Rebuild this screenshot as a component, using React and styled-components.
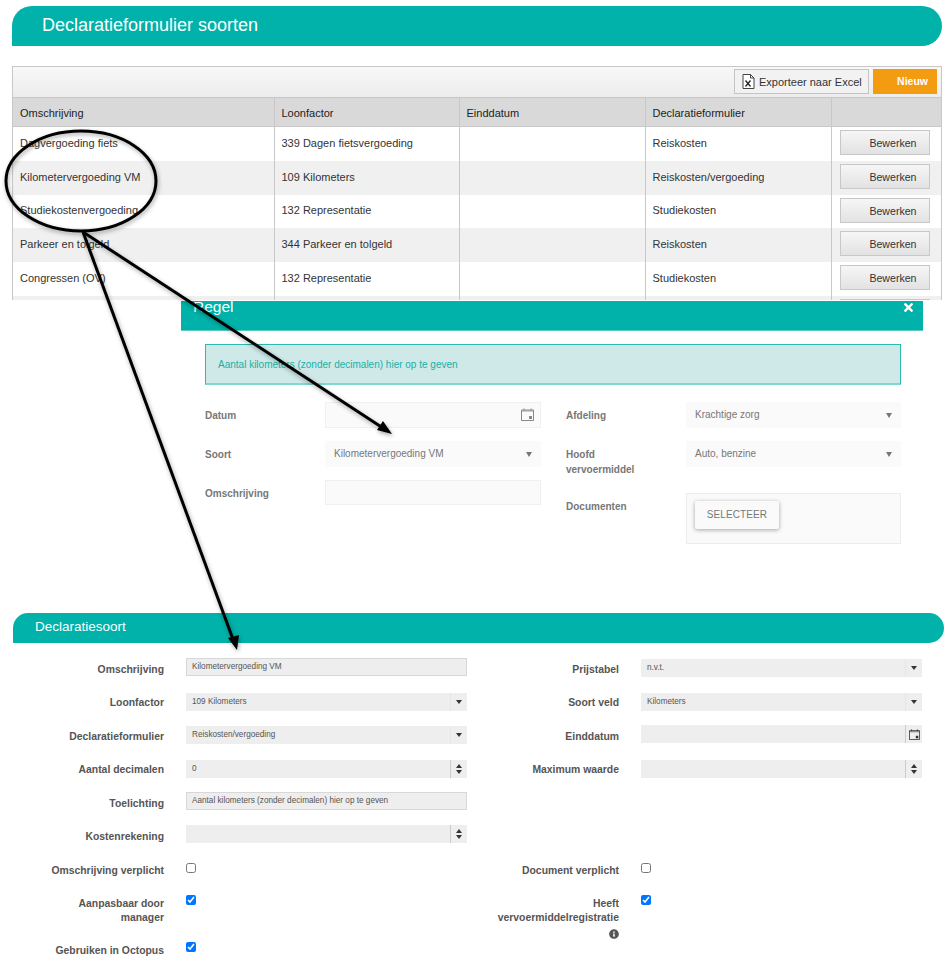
import React from 'react'
import styled, { createGlobalStyle } from 'styled-components'
import { FaTimes, FaInfoCircle } from 'react-icons/fa'

const GlobalStyle = createGlobalStyle`
  html, body {
    margin: 0;
    padding: 0;
    background: #fff;
    overflow: hidden;
  }
  body {
    font-family: "Liberation Sans", Arial, sans-serif;
  }
`

const teal = '#00b2a9'

const Page = styled.div`
  position: relative;
  width: 952px;
  height: 975px;
  overflow: hidden;
  padding-top: 6px;
  box-sizing: border-box;
`

const TitleBar = styled.div`
  box-sizing: border-box;
  margin-left: 12px;
  width: 930px;
  height: 40px;
  padding-left: 30px;
  background: ${teal};
  border-radius: 20px 20px 20px 0;
  color: #fff;
  font-size: 18px;
  line-height: 38px;
`

const GridBox = styled.div`
  box-sizing: border-box;
  margin: 20px 0 0 12px;
  width: 930px;
  height: 234px;
  overflow: hidden;
  border: 1px solid #c8c8c8;
  border-bottom: 0;
`

const Toolbar = styled.div`
  box-sizing: border-box;
  height: 31px;
  padding: 2px 4px 0 0;
  display: flex;
  justify-content: flex-end;
  gap: 4px;
  background: linear-gradient(#f8f8f8, #ececec);
  border-bottom: 1px solid #c8c8c8;
`

const ExportButton = styled.div`
  box-sizing: border-box;
  width: 135px;
  height: 25px;
  display: flex;
  align-items: center;
  gap: 4px;
  padding-left: 7px;
  background: #f2f2f2;
  border: 1px solid #c4c4c4;
  color: #333;
  font-size: 11px;
  white-space: nowrap;
`

const NewButton = styled.div`
  box-sizing: border-box;
  width: 64px;
  height: 25px;
  padding-right: 9px;
  background: #f39c12;
  color: #fff;
  font-size: 10.5px;
  font-weight: bold;
  line-height: 24px;
  text-align: right;
`

const Table = styled.table`
  width: 928px;
  table-layout: fixed;
  border-collapse: collapse;
  font-size: 11px;
`

const HeadCell = styled.th`
  height: 26px;
  padding: 2px 0 0 7px;
  background: #d9d9d9;
  border-left: 1px solid #c8c8c8;
  border-bottom: 1px solid #c8c8c8;
  color: #222;
  font-size: 11px;
  font-weight: normal;
  text-align: left;
  &:first-child {
    border-left: 0;
  }
`

const Row = styled.tr`
  height: ${p => p.$h}px;
  background: ${p => (p.$odd ? '#f0f0f0' : '#fff')};
`

const Cell = styled.td`
  padding: 0 0 2px 7px;
  border-left: 1px solid #c8c8c8;
  color: #333;
  &:first-child {
    border-left: 0;
  }
`

const ButtonCell = styled.td`
  padding: 0 0 2px 8px;
  border-left: 1px solid #c8c8c8;
`

const EditButton = styled.div`
  box-sizing: border-box;
  width: 90px;
  height: 25px;
  padding-right: 12px;
  background: linear-gradient(#f6f6f6, #e2e2e2);
  border: 1px solid #c8c8c8;
  color: #333;
  font-size: 10.6px;
  line-height: 24px;
  text-align: right;
`

const Dialog = styled.div`
  margin: 1px 0 0 181px;
  width: 742px;
`

const DialogHead = styled.div`
  box-sizing: border-box;
  height: 30px;
  padding: 0 8px 0 12px;
  display: flex;
  justify-content: space-between;
  background: ${teal};
  border-bottom: 1px solid #5ccac4;
  overflow: hidden;
  color: #fff;
`

const DialogTitle = styled.div`
  margin-top: -4px;
  font-size: 15.5px;
  line-height: 20px;
`

const CloseIcon = styled(FaTimes)`
  margin-top: 0;
  width: 13px;
  height: 13px;
`

const Alert = styled.div`
  box-sizing: border-box;
  margin: 13px 22px 0 24px;
  height: 41px;
  padding-left: 12px;
  background: #cfe8e8;
  border: 1px solid #2fb8ae;
  border-bottom: 2px solid #7fd8d2;
  color: #18b0a6;
  font-size: 10px;
  line-height: 40px;
`

const DialogForm = styled.div`
  margin: 17px 22px 0 24px;
  display: grid;
  grid-template-columns: 336px 335px;
  column-gap: 25px;
`

const DialogColumn = styled.div`
  display: flex;
  flex-direction: column;
`

const DialogField = styled.div`
  display: grid;
  grid-template-columns: 120px 1fr;
  margin-top: ${p => p.$mt || 0}px;
`

const DialogLabel = styled.div`
  padding-top: ${p => p.$pt || 6}px;
  color: #777;
  font-size: 10px;
  font-weight: bold;
  line-height: 15px;
`

const SoftInput = styled.div`
  box-sizing: border-box;
  height: ${p => p.$h}px;
  padding: 0 6px 2px 8px;
  display: flex;
  align-items: center;
  justify-content: space-between;
  background: #fafafa;
  border: 1px solid ${p => (p.$bare ? '#fafafa' : '#f0f0f0')};
  color: #777;
  font-size: 10px;
`

const SoftCaret = styled.span`
  margin: 2px 2px 0 0;
  border-left: 3.5px solid transparent;
  border-right: 3.5px solid transparent;
  border-top: 5px solid #777;
`

const DocBox = styled.div`
  box-sizing: border-box;
  height: 51px;
  padding: 7px 8px;
  background: #fafafa;
  border: 1px solid #ececec;
`

const SelectButton = styled.div`
  width: 84px;
  height: 28px;
  background: #fafafa;
  box-shadow: 0 1px 4px rgba(0, 0, 0, 0.35);
  border-radius: 2px;
  color: #777;
  font-size: 10px;
  letter-spacing: 0.1px;
  line-height: 27px;
  text-align: center;
`

const SectionBar = styled.div`
  box-sizing: border-box;
  margin: 69px 0 0 13px;
  width: 931px;
  height: 30px;
  padding-left: 22px;
  background: ${teal};
  border-radius: 15px 15px 15px 0;
  color: #fff;
  font-size: 13.5px;
  line-height: 28px;
`

const FormGrid = styled.div`
  margin: 15px 0 0 13px;
  display: grid;
  grid-template-columns: 151px 281px 130px 281px;
  grid-template-rows: 35px 33px 34px 32px 33px 38px 30px 47px 30px;
  column-gap: 22px;
`

const Label = styled.div`
  padding-top: ${p => p.$pt}px;
  color: #555;
  font-size: 10.4px;
  font-weight: bold;
  line-height: 14px;
  text-align: right;
`

const Control = styled.div`
  box-sizing: border-box;
  height: 18px;
  margin-top: ${p => p.$mt || 0}px;
  padding-left: ${p => (p.$framed ? 5 : 6)}px;
  display: flex;
  align-items: center;
  justify-content: space-between;
  background: #eee;
  border: ${p => (p.$framed ? '1px solid #d8d8d8' : '0')};
  color: #555;
  font-size: 8.2px;
`

const ControlValue = styled.span`
  margin-top: -1px;
`

const Addon = styled.span`
  flex: none;
  box-sizing: border-box;
  width: 17px;
  height: 18px;
  display: flex;
  flex-direction: column;
  align-items: center;
  justify-content: center;
  gap: 2px;
  border-left: 1px solid ${p => (p.$line ? '#ccc' : '#e6e6e6')};
`

const Triangle = styled.span`
  border-left: 3.5px solid transparent;
  border-right: 3.5px solid transparent;
  ${p => (p.$up ? 'border-bottom: 4px solid #333;' : 'border-top: 4px solid #333;')}
`

const Check = styled.input`
  display: block;
  width: 10px;
  height: 10px;
  margin: ${p => p.$mt || 0}px 0 0;
  accent-color: #0075ff;
`

const InfoIcon = styled(FaInfoCircle)`
  display: block;
  width: 10px;
  height: 10px;
  margin: 4px 0 0 auto;
  color: #555;
`

const Overlay = styled.svg`
  position: absolute;
  top: 0;
  left: 0;
  pointer-events: none;
  filter: drop-shadow(1px 2px 2px rgba(0, 0, 0, 0.35));
`

const ExcelIcon = () => (
  <svg width="13" height="15" viewBox="0 0 13 15" fill="none">
    <path d="M1 .5h7.5L12 4v10.500H1z" fill="#fff" stroke="#444" />
    <path d="M8.500.5V4H12" stroke="#444" />
    <path d="M3.500 6.500l5 6M8.500 6.500l-5 6" stroke="#222" strokeWidth="1.300" />
  </svg>
)

const CalendarIcon = ({ color = '#888', size = 13 }) => (
  <svg width={size} height={size} viewBox="0 0 13 13" fill="none">
    <path d="M.5 2h12v10.500H.5z" stroke={color} />
    <path d="M.5 2h12v2H.5z" fill={color} opacity="0.4" />
    <path d="M3 .5v2M10 .5v2" stroke={color} />
    <path d="M8 8h3v3H8z" fill={color} />
  </svg>
)

const rows = [
  ['Dagvergoeding fiets', '339 Dagen fietsvergoeding', 'Reiskosten', 34],
  ['Kilometervergoeding VM', '109 Kilometers', 'Reiskosten/vergoeding', 34],
  ['Studiekostenvergoeding', '132 Representatie', 'Studiekosten', 33],
  ['Parkeer en tolgeld', '344 Parkeer en tolgeld', 'Reiskosten', 34],
  ['Congressen (OV)', '132 Representatie', 'Studiekosten', 34],
]

const SelectControl = ({ value, mt }) => (
  <Control $mt={mt}>
    <ControlValue>{value}</ControlValue>
    <Addon><Triangle /></Addon>
  </Control>
)

const SpinControl = ({ value, mt }) => (
  <Control $mt={mt}>
    <ControlValue>{value}</ControlValue>
    <Addon $line><Triangle $up /><Triangle /></Addon>
  </Control>
)

const App = () => (
  <Page>
    <GlobalStyle />
    <TitleBar>Declaratieformulier soorten</TitleBar>

    <GridBox>
      <Toolbar>
        <ExportButton><ExcelIcon />Exporteer naar Excel</ExportButton>
        <NewButton>Nieuw</NewButton>
      </Toolbar>
      <Table>
        <colgroup>
          <col style={{ width: 261 }} />
          <col style={{ width: 185 }} />
          <col style={{ width: 186 }} />
          <col style={{ width: 186 }} />
          <col />
        </colgroup>
        <thead>
          <tr>
            <HeadCell>Omschrijving</HeadCell>
            <HeadCell>Loonfactor</HeadCell>
            <HeadCell>Einddatum</HeadCell>
            <HeadCell>Declaratieformulier</HeadCell>
            <HeadCell />
          </tr>
        </thead>
        <tbody>
          {rows.map((r, i) => (
            <Row key={r[0]} $h={r[3]} $odd={i % 2 === 1}>
              <Cell>{r[0]}</Cell>
              <Cell>{r[1]}</Cell>
              <Cell />
              <Cell>{r[2]}</Cell>
              <ButtonCell><EditButton>Bewerken</EditButton></ButtonCell>
            </Row>
          ))}
          <Row $h={34} $odd>
            <Cell />
            <Cell />
            <Cell />
            <Cell />
            <ButtonCell><EditButton>Bewerken</EditButton></ButtonCell>
          </Row>
        </tbody>
      </Table>
    </GridBox>

    <Dialog>
      <DialogHead>
        <DialogTitle>Regel</DialogTitle>
        <CloseIcon />
      </DialogHead>
      <Alert>Aantal kilometers (zonder decimalen) hier op te geven</Alert>
      <DialogForm>
        <DialogColumn>
          <DialogField>
            <DialogLabel>Datum</DialogLabel>
            <SoftInput $h={26}><span /><CalendarIcon /></SoftInput>
          </DialogField>
          <DialogField $mt={13}>
            <DialogLabel>Soort</DialogLabel>
            <SoftInput $h={26} $bare>Kilometervergoeding VM<SoftCaret /></SoftInput>
          </DialogField>
          <DialogField $mt={13}>
            <DialogLabel>Omschrijving</DialogLabel>
            <SoftInput $h={25} />
          </DialogField>
        </DialogColumn>
        <DialogColumn>
          <DialogField>
            <DialogLabel>Afdeling</DialogLabel>
            <SoftInput $h={26} $bare>Krachtige zorg<SoftCaret /></SoftInput>
          </DialogField>
          <DialogField $mt={13}>
            <DialogLabel>Hoofd<br />vervoermiddel</DialogLabel>
            <SoftInput $h={26} $bare>Auto, benzine<SoftCaret /></SoftInput>
          </DialogField>
          <DialogField $mt={16}>
            <DialogLabel>Documenten</DialogLabel>
            <DocBox><SelectButton>SELECTEER</SelectButton></DocBox>
          </DialogField>
        </DialogColumn>
      </DialogForm>
    </Dialog>

    <SectionBar>Declaratiesoort</SectionBar>
    <FormGrid>
      <Label $pt={5}>Omschrijving</Label>
      <Control $framed><ControlValue>Kilometervergoeding VM</ControlValue></Control>
      <Label $pt={5}>Prijstabel</Label>
      <SelectControl value="n.v.t." mt={1} />

      <Label $pt={3}>Loonfactor</Label>
      <SelectControl value="109 Kilometers" />
      <Label $pt={3}>Soort veld</Label>
      <SelectControl value="Kilometers" />

      <Label $pt={4}>Declaratieformulier</Label>
      <SelectControl value="Reiskosten/vergoeding" />
      <Label $pt={4}>Einddatum</Label>
      <Control $mt={-1}>
        <span />
        <Addon $line><CalendarIcon color="#333" size={11} /></Addon>
      </Control>

      <Label $pt={3}>Aantal decimalen</Label>
      <SpinControl value="0" />
      <Label $pt={3}>Maximum waarde</Label>
      <SpinControl />

      <Label $pt={5}>Toelichting</Label>
      <Control $framed><ControlValue>Aantal kilometers (zonder decimalen) hier op te geven</ControlValue></Control>
      <span />
      <span />

      <Label $pt={5}>Kostenrekening</Label>
      <SpinControl />
      <span />
      <span />

      <Label $pt={1}>Omschrijving verplicht</Label>
      <Check type="checkbox" readOnly />
      <Label $pt={1}>Document verplicht</Label>
      <Check type="checkbox" readOnly />

      <Label $pt={4}>Aanpasbaar door<br />manager</Label>
      <Check type="checkbox" checked readOnly $mt={2} />
      <Label $pt={4}>
        Heeft<br />vervoermiddelregistratie
        <InfoIcon />
      </Label>
      <Check type="checkbox" checked readOnly $mt={2} />

      <Label $pt={4}>Gebruiken in Octopus</Label>
      <Check type="checkbox" checked readOnly $mt={2} />
      <span />
      <span />
    </FormGrid>

    <Overlay width="952" height="975" viewBox="0 0 952 975" fill="none">
      <ellipse cx="81" cy="181" rx="75" ry="50" stroke="#000" strokeWidth="3" />
      <path d="M83 232L386 430" stroke="#000" strokeWidth="3" />
      <path d="M392 434L377 430L383 421z" fill="#000" />
      <path d="M83 232L234 642" stroke="#000" strokeWidth="3" />
      <path d="M237 650L228 638L239 635z" fill="#000" />
    </Overlay>
  </Page>
)

export default App
